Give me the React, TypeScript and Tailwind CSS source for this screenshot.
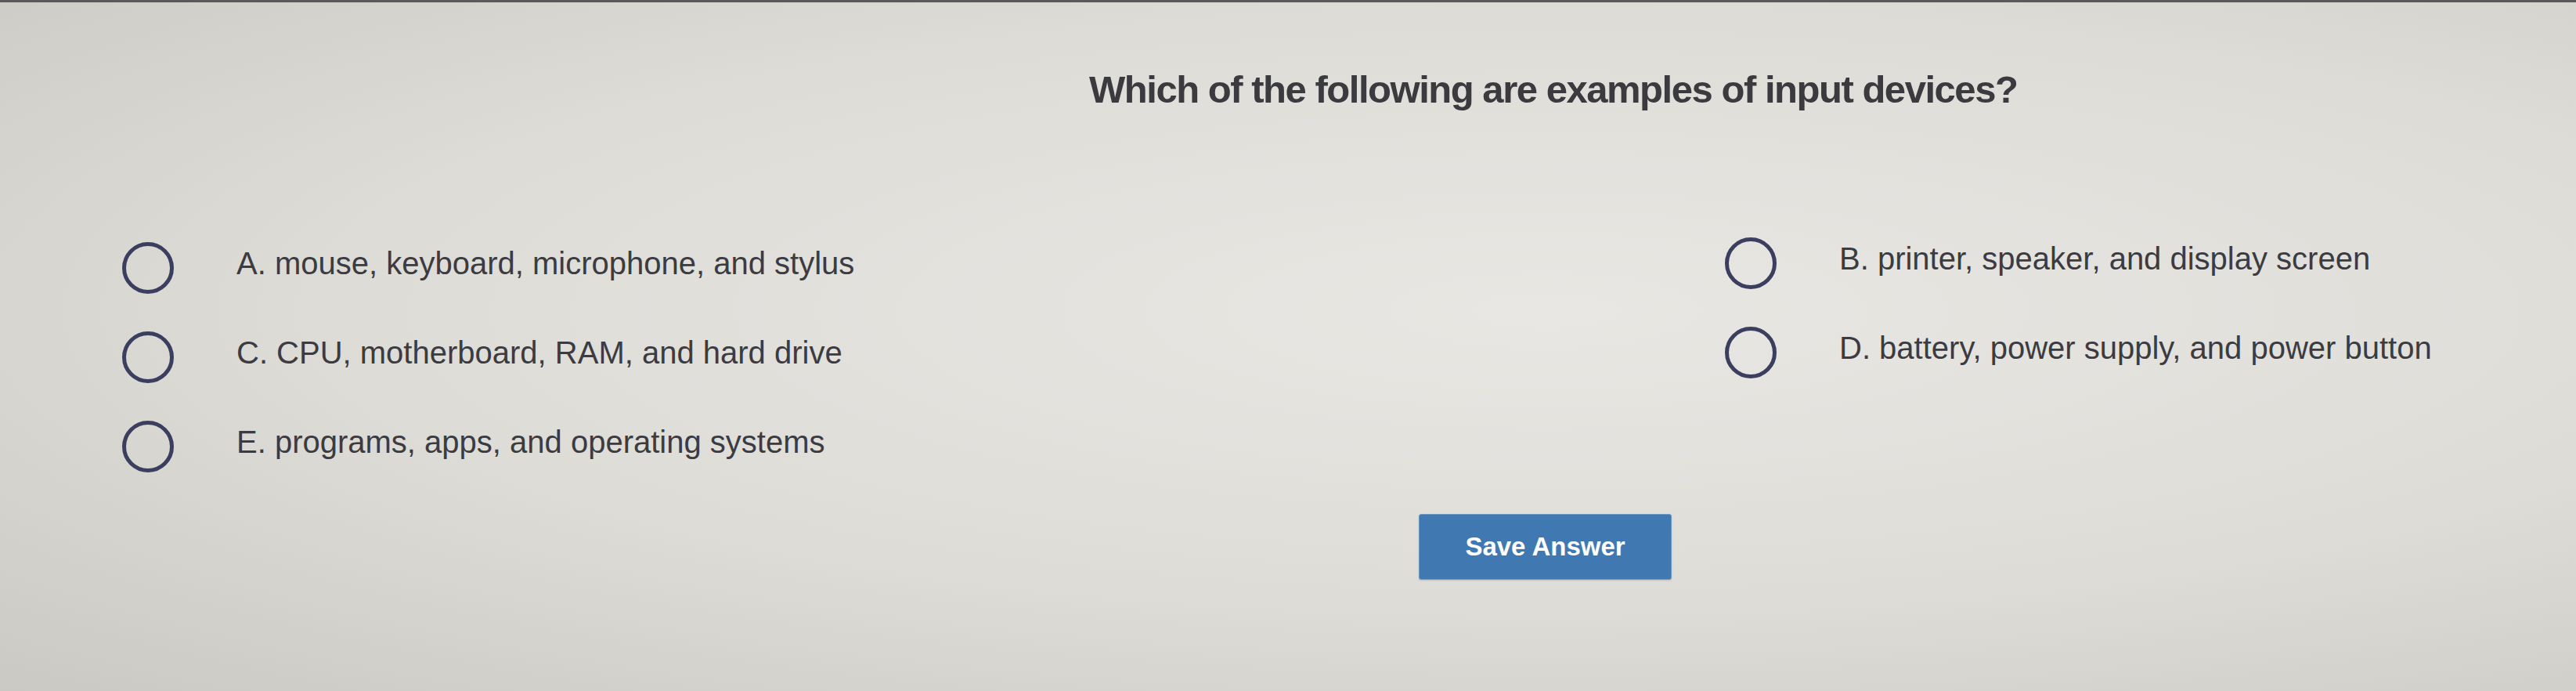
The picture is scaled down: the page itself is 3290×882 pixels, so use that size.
const leftOptions = [
  'A. mouse, keyboard, microphone, and stylus',
  'C. CPU, motherboard, RAM, and hard drive',
  'E. programs, apps, and operating systems',
];

const rightOptions = [
  'B. printer, speaker, and display screen',
  'D. battery, power supply, and power button',
];

function Radio() {
  return <div className="h-[66px] w-[66px] shrink-0 rounded-full border-[5px] border-[#3b3e5e]" />;
}

function Option({ label }: { label: string }) {
  return (
    <label className="flex h-[114px] items-center gap-[80px]">
      <Radio />
      <span className="pb-[12px] text-[40px] leading-none text-[#3b3b41]">{label}</span>
    </label>
  );
}

export default function App() {
  return (
    <div className="flex h-[882px] w-full flex-col overflow-hidden bg-[radial-gradient(ellipse_at_60%_45%,#e8e7e3_0%,#dddcd7_55%,#cac9c4_100%)] font-['Liberation_Sans',Arial,sans-serif]">
      <div className="h-[3px] w-full bg-[#5a5a5a]" />

      <h1 className="ml-[1391px] mt-[87px] text-[49px] font-bold leading-none tracking-[-0.03em] whitespace-nowrap text-[#3a3a3f]">
        Which of the following are examples of input devices?
      </h1>

      <div className="ml-[156px] mt-[146px] grid grid-cols-[2047px_1fr]">
        <div className="flex flex-col">
          {leftOptions.map((o) => (
            <Option key={o} label={o} />
          ))}
        </div>
        <div className="-mt-[6px] flex flex-col">
          {rightOptions.map((o) => (
            <Option key={o} label={o} />
          ))}
        </div>
      </div>

      <div className="ml-[1812px] mt-[29px]">
        <button className="flex h-[84px] w-[323px] items-center justify-center rounded-[3px] border border-[#6c98c4] bg-[#4079b1] text-[33px] font-bold text-white shadow-[0_1px_2px_rgba(0,0,0,0.15)]">
          Save Answer
        </button>
      </div>
    </div>
  );
}
